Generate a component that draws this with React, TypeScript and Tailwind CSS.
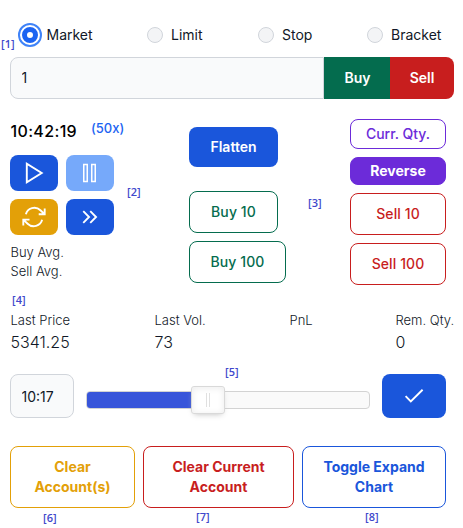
import type { ReactNode } from 'react';

const orderTypes = [
  { label: 'Market', width: 'w-[129px]' },
  { label: 'Limit', width: 'w-[111px]' },
  { label: 'Stop', width: 'w-[109px]' },
  { label: 'Bracket', width: 'w-[90px]' },
];

const stats = [
  { label: 'Last Price', value: '5341.25', width: 'w-[144px]' },
  { label: 'Last Vol.', value: '73', width: 'w-[135px]' },
  { label: 'PnL', value: '', width: 'w-[106px]' },
  { label: 'Rem. Qty.', value: '0', width: 'w-[60px]' },
];

function Marker({ n, place }: { n: number; place: string }) {
  return (
    <span className={`absolute font-['Open_Sans',sans-serif] text-[11px] leading-3 font-semibold text-[#3f48cc] ${place}`}>
      [{n}]
    </span>
  );
}

function IconButton({ color, label, children }: { color: string; label: string; children: ReactNode }) {
  return (
    <button aria-label={label} className={`flex h-9 w-12 items-center justify-center rounded-lg text-white ${color}`}>
      <svg className="h-6 w-6" viewBox="0 0 24 24" fill="none" stroke="currentColor" strokeWidth="1.9">
        {children}
      </svg>
    </button>
  );
}

function OutlineButton({ className, children }: { className: string; children: ReactNode }) {
  return (
    <button className={`flex items-center justify-center rounded-lg border text-center text-sm leading-5 whitespace-nowrap ${className}`}>
      {children}
    </button>
  );
}

export default function App() {
  return (
    <div className="relative h-[528px] w-[463px] overflow-hidden bg-white pt-[25px] pl-2.5 font-[Inter,sans-serif] text-[#111827]">
      <div className="flex h-5 items-center pl-2 text-sm">
        {orderTypes.map((o, i) => (
          <label key={o.label} className={`flex shrink-0 items-center ${o.width}`}>
            {i === 0 ? (
              <span className="-my-1 mr-[4.5px] flex h-6 w-6 items-center justify-center rounded-full border-2 border-[#3f83f8]">
                <span className="h-4 w-4 rounded-full border-5 border-[#1c64f2] bg-white" />
              </span>
            ) : (
              <span className="mr-2 h-4 w-4 rounded-full border border-[#d1d5db] bg-[#f3f4f6]" />
            )}
            {o.label}
          </label>
        ))}
      </div>

      <div className="mt-3 flex h-[42px] w-[444px] text-sm">
        <input
          defaultValue="1"
          className="w-[314px] rounded-l-lg border border-[#d1d5db] bg-[#f9fafb] px-[10.5px] outline-none"
        />
        <button className="w-[66px] bg-[#046c4e] pl-px font-semibold text-white">Buy</button>
        <button className="w-16 rounded-r-lg bg-[#c81e1e] font-semibold text-white">Sell</button>
      </div>

      <div className="mt-5 flex h-[166px] w-[436px]">
        <div className="w-[179px]">
          <div className="flex h-6 text-base leading-6 font-medium text-black">
            <span className="w-[81px] pl-[0.5px] tracking-[0.35px]">10:42:19</span>
            <span className="-mt-[3px] text-[13px] leading-6 text-[#1c64f2]">(50x)</span>
          </div>
          <div className="mt-3 grid w-[104px] grid-cols-2 gap-2">
            <IconButton color="bg-[#1a56db]" label="Play">
              <path d="M4.8 2.8v18.4L19.7 12z" />
            </IconButton>
            <IconButton color="bg-[#76a9fa]" label="Pause">
              <path strokeWidth="1.5" d="M5.75 3.6h3.5v16.8h-3.5zM13.75 3.6h3.5v16.8h-3.5z" />
            </IconButton>
            <IconButton color="bg-[#e3a008]" label="Restart">
              <path d="M16.7 9.2h6V3.6M1.3 20.4v-5.8h6.2m-6.2 0 4.3 4.1a8.6 8.2 0 0 0 14.5-4M3.9 9.2a8.6 8.2 0 0 1 14.5-4l4.3 4" />
            </IconButton>
            <IconButton color="bg-[#1a56db]" label="Fast forward">
              <path d="m5.25 6.2 5.8 5.8-5.8 5.8m7-11.6 5.8 5.8-5.8 5.8" />
            </IconButton>
          </div>
          <div className="mt-2 pl-[0.5px] text-[13px] leading-[19px] font-light">
            <div>Buy Avg.</div>
            <div>Sell Avg.</div>
          </div>
        </div>

        <div className="flex w-[161px] flex-col items-start pt-2">
          <button className="h-10 w-[89px] rounded-lg bg-[#1a56db] text-sm font-semibold text-white">Flatten</button>
          <OutlineButton className="mt-6 h-[42px] w-[89px] border-[#046c4e] font-medium tracking-[0.1px] text-[#046c4e]">Buy 10</OutlineButton>
          <OutlineButton className="mt-2 h-[42px] w-[97px] border-[#046c4e] font-medium tracking-[0.1px] text-[#046c4e]">Buy 100</OutlineButton>
        </div>

        <div className="flex w-24 flex-col gap-2">
          <OutlineButton className="h-[30px] border-[#6c2bd9] font-medium text-[#6c2bd9]">Curr. Qty.</OutlineButton>
          <OutlineButton className="h-7 border-[#6c2bd9] bg-[#6c2bd9] font-bold text-white">Reverse</OutlineButton>
          <OutlineButton className="h-[42px] border-[#c81e1e] font-medium tracking-[0.1px] text-[#c81e1e]">Sell 10</OutlineButton>
          <OutlineButton className="h-[42px] border-[#c81e1e] font-medium tracking-[0.1px] text-[#c81e1e]">Sell 100</OutlineButton>
        </div>
      </div>

      <div className="mt-[26px] flex h-[43px] pl-[0.5px] font-light">
        {stats.map((s) => (
          <div key={s.label} className={`shrink-0 whitespace-nowrap ${s.width}`}>
            <div className="text-[13px] leading-[18px]">{s.label}</div>
            <div className="text-base leading-[26px]">{s.value}</div>
          </div>
        ))}
      </div>

      <div className="mt-5 flex h-11 w-[436px] items-center">
        <input
          defaultValue="10:17"
          className="h-full w-16 rounded-lg border border-[#d1d5db] bg-[#f9fafb] px-[10.5px] text-sm outline-none"
        />
        <div className="relative mt-[7px] ml-3 h-[18px] w-[284px] rounded-sm border border-[#d3d3d3] bg-[#fafafa]">
          <div className="h-full w-[121px] rounded-l-[3px] bg-[#3855da]" />
          <div className="absolute -top-[6px] left-[104px] flex h-7 w-[34px] items-center justify-center gap-0.5 rounded-[3px] border border-[#d9d9d9] bg-white shadow-[inset_0_0_1px_#fff,inset_0_1px_7px_#ebebeb,0_3px_6px_-3px_#bbb]">
            <span className="h-3.5 w-px bg-[#e0e0e0]" />
            <span className="h-3.5 w-px bg-[#e0e0e0]" />
          </div>
        </div>
        <button aria-label="Confirm" className="ml-3 flex h-full w-16 items-center justify-center rounded-lg bg-[#1a56db] text-white">
          <svg className="h-6 w-6" viewBox="0 0 24 24" fill="none" stroke="currentColor" strokeWidth="1.9">
            <path d="m3.6 12.2 5.2 5.2L20.6 5.8" />
          </svg>
        </button>
      </div>

      <div className="mt-7 flex h-[62px] gap-2">
        <OutlineButton className="w-[125px] border-[#e3a008] font-bold text-[#e3a008]">Clear<br />Account(s)</OutlineButton>
        <OutlineButton className="w-[151px] border-[#c81e1e] font-bold text-[#c81e1e]">Clear Current<br />Account</OutlineButton>
        <OutlineButton className="w-36 border-[#1a56db] font-bold text-[#1a56db]">Toggle Expand<br />Chart</OutlineButton>
      </div>

      <Marker n={1} place="left-px top-[38px]" />
      <Marker n={2} place="left-[127px] top-[186px]" />
      <Marker n={3} place="left-[308px] top-[197px]" />
      <Marker n={4} place="left-[12px] top-[294px]" />
      <Marker n={5} place="left-[225px] top-[366px]" />
      <Marker n={6} place="left-[43px] top-[512px]" />
      <Marker n={7} place="left-[196px] top-[511px]" />
      <Marker n={8} place="left-[365px] top-[511px]" />
    </div>
  );
}
